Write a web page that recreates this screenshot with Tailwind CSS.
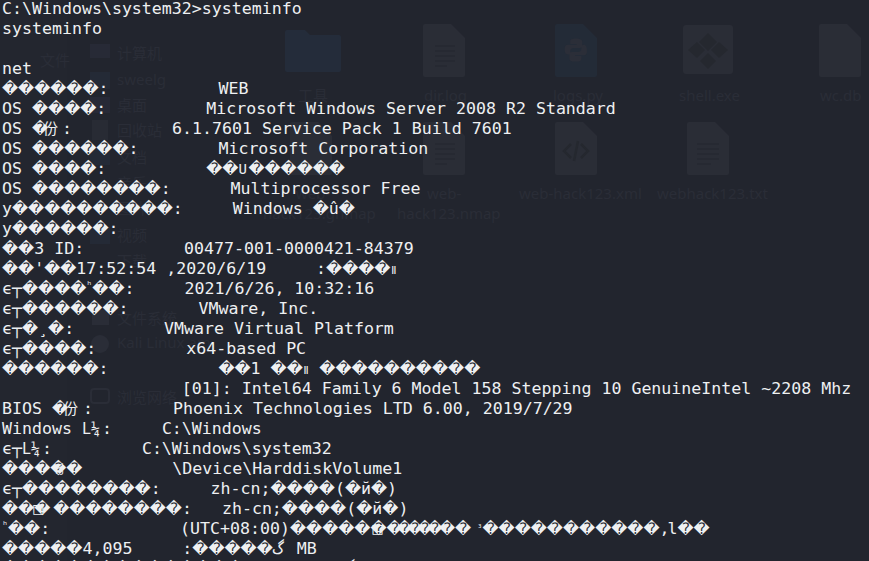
<!DOCTYPE html>
<html>
<head>
<meta charset="utf-8">
<script src="https://cdn.jsdelivr.net/npm/@tailwindcss/browser@4"></script>
<title>systeminfo</title>
</head>
<body class="bg-[#22252e]">
<main class="relative w-[869px] h-[561px] overflow-hidden bg-[#22252e]">

  <!-- desktop showing through the terminal -->
  <div class="absolute inset-0 text-[#2a2d37] text-[15px] leading-[20px] font-['Noto_Sans','Noto_Sans_CJK_SC',sans-serif]">
    <div class="absolute left-0 top-0 w-[67px] h-full bg-[#23262f]"></div>
    <span class="absolute left-[40px] top-[50px]">文件</span>
    <div class="absolute left-[90px] top-[44px] w-[20px] h-[14px] bg-[#272a36]"></div>
    <span class="absolute left-[117px] top-[43px]">计算机</span>
    <div class="absolute left-[90px] top-[72px] w-[20px] h-[17px] bg-[#242a36]"></div>
    <span class="absolute left-[117px] top-[69px]">sweelg</span>
    <div class="absolute left-[90px] top-[97px] w-[20px] h-[16px] bg-[#272936]"></div>
    <span class="absolute left-[117px] top-[95px]">桌面</span>
    <div class="absolute left-[92px] top-[120px] w-[16px] h-[20px] bg-[#282b34]"></div>
    <span class="absolute left-[117px] top-[120px]">回收站</span>
    <div class="absolute left-[90px] top-[148px] w-[20px] h-[17px] bg-[#242a36]"></div>
    <span class="absolute left-[117px] top-[147px]">文档</span>
    <span class="absolute left-[117px] top-[173px]">音乐</span>
    <span class="absolute left-[117px] top-[198px]">图片</span>
    <div class="absolute left-[90px] top-[227px] w-[20px] h-[17px] bg-[#242a36]"></div>
    <span class="absolute left-[117px] top-[225px]">视频</span>
    <span class="absolute left-[117px] top-[251px]">下载</span>
    <div class="absolute left-[92px] top-[310px] w-[17px] h-[15px] bg-[#2a2d37]"></div>
    <span class="absolute left-[117px] top-[308px]">文件系统</span>
    <div class="absolute left-[91px] top-[335px] w-[18px] h-[18px] rounded-full bg-[#2a2d37]"></div>
    <span class="absolute left-[117px] top-[332px]">Kali Linux am</span>
    <div class="absolute left-[90px] top-[388px] w-[20px] h-[16px] rounded-sm border-2 border-[#2a2d37]"></div>
    <span class="absolute left-[117px] top-[387px]">浏览网络</span>

    <svg class="absolute left-[285px] top-[30px]" width="56" height="42" viewBox="0 0 56 42"><path d="M2 0h18l5 5h29a2 2 0 0 1 2 2v33a2 2 0 0 1-2 2H2a2 2 0 0 1-2-2V2a2 2 0 0 1 2-2z" fill="#242c3a"/></svg>
    <span class="absolute left-[298px] top-[85px]">工具</span>

    <svg class="absolute left-[423px] top-[24px]" width="42" height="53" viewBox="0 0 42 53"><path d="M2 0h26l14 14v37a2 2 0 0 1-2 2H2a2 2 0 0 1-2-2V2a2 2 0 0 1 2-2z" fill="#2a2d36"/><path d="M12 22h20M12 27h20M12 32h20M12 37h20M12 42h12" stroke="#262932" stroke-width="2"/></svg>
    <span class="absolute left-[424px] top-[85px]">dir.log</span>

    <svg class="absolute left-[555px] top-[24px]" width="42" height="53" viewBox="0 0 42 53"><path d="M2 0h26l14 14v37a2 2 0 0 1-2 2H2a2 2 0 0 1-2-2V2a2 2 0 0 1 2-2z" fill="#232b37"/><path d="M21 18c-5 0-7 1-7 4v3h8v1H11c-3 0-4 2-4 6s1 6 4 6h3v-4c0-3 2-4 5-4h7c2 0 3-1 3-3v-5c0-3-3-4-8-4zM28 27v4c0 3-2 4-5 4h-7c-2 0-3 1-3 3v5c0 3 3 4 8 4s7-1 7-4v-3h-8v-1h11c3 0 4-2 4-6s-1-7-4-7z" fill="#2b2e38" transform="translate(4 0) scale(.8)"/></svg>
    <span class="absolute left-[553px] top-[85px]">logs.py</span>

    <svg class="absolute left-[683px] top-[25px]" width="50" height="49" viewBox="0 0 50 49"><rect width="50" height="49" rx="3" fill="#2a2d36"/><path d="M25 8l9 9-9 9-9-9zM14 17l8 8-8 8-9-8zM36 17l9 8-9 8-8-8zM25 28l8 8-8 8-8-8z" fill="#25282f"/></svg>
    <span class="absolute left-[679px] top-[85px]">shell.exe</span>

    <svg class="absolute left-[819px] top-[24px]" width="42" height="53" viewBox="0 0 42 53"><path d="M2 0h26l14 14v37a2 2 0 0 1-2 2H2a2 2 0 0 1-2-2V2a2 2 0 0 1 2-2z" fill="#2a2d36"/></svg>
    <span class="absolute left-[820px] top-[85px]">wc.db</span>

    <svg class="absolute left-[290px] top-[122px]" width="42" height="53" viewBox="0 0 42 53"><path d="M2 0h26l14 14v37a2 2 0 0 1-2 2H2a2 2 0 0 1-2-2V2a2 2 0 0 1 2-2z" fill="#2a2d36"/></svg>
    <svg class="absolute left-[423px] top-[122px]" width="42" height="53" viewBox="0 0 42 53"><path d="M2 0h26l14 14v37a2 2 0 0 1-2 2H2a2 2 0 0 1-2-2V2a2 2 0 0 1 2-2z" fill="#2a2d36"/><path d="M12 22h20M12 27h20M12 32h20M12 37h20M12 42h12" stroke="#262932" stroke-width="2"/></svg>
    <svg class="absolute left-[555px] top-[122px]" width="42" height="53" viewBox="0 0 42 53"><path d="M2 0h26l14 14v37a2 2 0 0 1-2 2H2a2 2 0 0 1-2-2V2a2 2 0 0 1 2-2z" fill="#2a2d36"/><path d="M16 22l-7 7 7 7M26 22l7 7-7 7M23 19l-4 20" fill="none" stroke="#25282f" stroke-width="2.5"/></svg>
    <svg class="absolute left-[687px] top-[122px]" width="42" height="53" viewBox="0 0 42 53"><path d="M2 0h26l14 14v37a2 2 0 0 1-2 2H2a2 2 0 0 1-2-2V2a2 2 0 0 1 2-2z" fill="#2a2d36"/><path d="M10 22h22M10 27h22M10 32h22M10 37h22M10 42h14" stroke="#262932" stroke-width="2"/></svg>
    <span class="absolute left-[288px] top-[183px] w-[50px] text-center">web-</span>
    <span class="absolute left-[263px] top-[203px]">hack123.gnmap</span>
    <span class="absolute left-[427px] top-[183px]">web-</span>
    <span class="absolute left-[397px] top-[203px]">hack123.nmap</span>
    <span class="absolute left-[519px] top-[183px]">web-hack123.xml</span>
    <span class="absolute left-[657px] top-[183px]">webhack123.txt</span>
  </div>

  <!-- terminal output -->
  <pre class="relative grid auto-rows-[20px] -mt-[1px] pl-[2px] text-[16.6px] leading-[20px] text-[#eef0f2] font-['DejaVu_Sans_Mono','Noto_Sans_CJK_SC',monospace] [&_span]:leading-[0] [&_i]:leading-[0] [&_i]:not-italic [&_i]:text-[15.7px] [&_i]:font-['DejaVu_Sans']"><div>C:\Windows\system32&gt;systeminfo</div>
<div>systeminfo</div>
<div></div>
<div>net</div>
<div><i>������</i>:           WEB</div>
<div>OS <i>����</i>:          Microsoft Windows Server 2008 R2 Standard</div>
<div>OS <i>�</i><span class="-ml-[5px] text-[15px]">份</span><span class="ml-[4px]">:</span>          6.1.7601 Service Pack 1 Build 7601</div>
<div>OS <i>������</i>:        Microsoft Corporation</div>
<div>OS <i>����</i>:          <i>��</i><span class="inline-block w-[10px] text-[14px]">U</span><i>������</i></div>
<div>OS <i>��������</i>:      Multiprocessor Free</div>
<div>у<i>����������</i>:     Windows <i>�</i>û<i>�</i></div>
<div>у<i>������</i>:</div>
<div><i>��</i>3 ID:          00477-001-0000421-84379</div>
<div><i>��</i>'<i>��</i>17:52:54 ,2020/6/19     :<i>����</i><span class="text-[11px]">ǁ</span></div>
<div>ϵ┬<i>����</i><span class="text-[10px] align-[5px]">ʰ</span><i>��</i>:     2021/6/26, 10:32:16</div>
<div>ϵ┬<i>������</i>:       VMware, Inc.</div>
<div>ϵ┬<i>�</i>¸<i>�</i>:         VMware Virtual Platform</div>
<div>ϵ┬<i>����</i>:         x64-based PC</div>
<div><i>������</i>:           <i>��</i>1 <i>��</i><span class="text-[11px]">ǁ</span> <i>����������</i></div>
<div>                  [01]: Intel64 Family 6 Model 158 Stepping 10 GenuineIntel ~2208 Mhz</div>
<div>BIOS <i>�</i><span class="-ml-[5px] text-[15px]">份</span><span class="ml-[5px]">:</span>        Phoenix Technologies LTD 6.00, 2019/7/29</div>
<div>Windows <span class="inline-block w-[20px] text-[15px]">L¼</span>:     C:\Windows</div>
<div>ϵ┬<span class="inline-block w-[20px] text-[15px]">L¼</span>:         C:\Windows\system32</div>
<div><i>����</i><span class="-ml-[12px] text-[12px]">豸</span><i>�</i>         \Device\HarddiskVolume1</div>
<div>ϵ┬<i>��������</i>:     zh-cn;<i>����</i>(<i>�</i>й<i>�</i>)</div>
<div><i>���</i><span class="-ml-[17px] mr-[10px]">□</span><i>��������</i>:   zh-cn;<i>����</i>(<i>�</i>й<i>�</i>)</div>
<div><span class="text-[10px] align-[5px]">ʰ</span><i>��</i>:             (UTC+08:00)<i>�����</i><i>�</i><span class="-ml-[14px] mr-[4px]">□</span><i class="tracking-[-6px]">�����</i><span class="ml-[2px]"></span><i>��</i><span class="ml-[6px] text-[9px] align-[3px]">³</span><i>�����������</i>,<span class="-ml-[2px]">l</span><i>��</i></div>
<div><i>�����</i>4,095     :<i>�����</i><span class="inline-block w-[14px]">گ</span> MB</div>
<div><i>���������������</i>          <span>گ</span></div></pre>
</main>
</body>
</html>
